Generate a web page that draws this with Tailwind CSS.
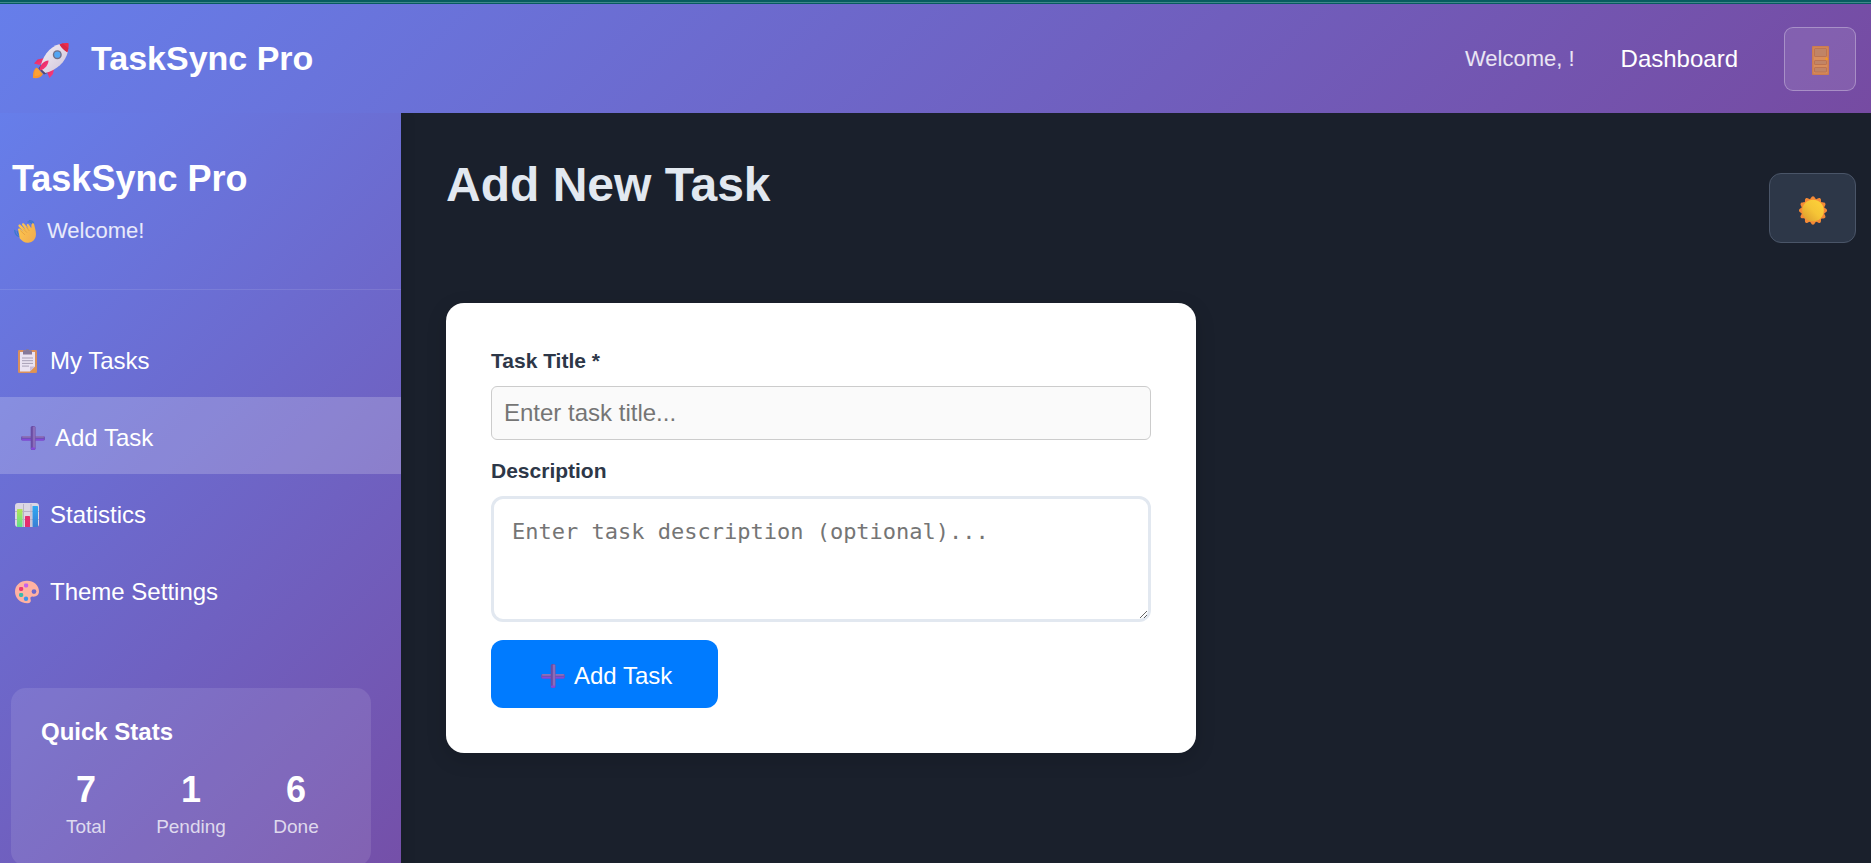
<!DOCTYPE html>
<html lang="en">
<head>
<meta charset="utf-8">
<meta name="viewport" content="width=device-width, initial-scale=1">
<title>TaskSync Pro - Add New Task</title>
<script src="https://cdn.jsdelivr.net/npm/@tailwindcss/browser@4"></script>
</head>
<body class="flex h-screen flex-col overflow-hidden bg-[#1a202c] font-['Liberation_Sans',Arial,sans-serif] text-2xl text-white">

<svg class="absolute size-0" aria-hidden="true">
  <defs>
    <linearGradient id="g-body" x1="0" y1="0" x2="1" y2="1"><stop offset="0" stop-color="#f4eff6"/><stop offset="1" stop-color="#cfc3d8"/></linearGradient>
    <linearGradient id="g-red" x1="0" y1="0" x2="1" y2="1"><stop offset="0" stop-color="#e0265a"/><stop offset="1" stop-color="#ff3f86"/></linearGradient>
    <linearGradient id="g-sun" x1="1" y1="0" x2="0" y2="1"><stop offset="0" stop-color="#ffd43a"/><stop offset="0.5" stop-color="#f5c436"/><stop offset="1" stop-color="#d9982e"/></linearGradient>
    <linearGradient id="g-green" x1="0" y1="0" x2="0" y2="1"><stop offset="0" stop-color="#b4e455"/><stop offset="1" stop-color="#5fe08c"/></linearGradient>
    <linearGradient id="g-blue" x1="0" y1="0" x2="0" y2="1"><stop offset="0" stop-color="#2fa8f2"/><stop offset="1" stop-color="#3a7fd4"/></linearGradient>
    <linearGradient id="g-hand" x1="0" y1="0" x2="1" y2="1"><stop offset="0" stop-color="#ffc94d"/><stop offset="1" stop-color="#f0a94e"/></linearGradient>
    <symbol id="i-plus" viewBox="0 0 24 24">
      <rect x="0" y="10" width="24" height="4.6" rx="1.6" fill="#6f50b6"/>
      <rect x="1" y="10" width="22" height="1.8" rx="0.8" fill="#8b70b6"/>
      <rect x="1" y="13" width="22" height="1.5" rx="0.7" fill="#8448dc"/>
      <rect x="9.7" y="0" width="4.8" height="24" rx="1.6" fill="#6a4ca4"/>
      <rect x="11.8" y="0.6" width="2.4" height="22.6" rx="1" fill="#8a6cba"/>
      <rect x="10" y="21.6" width="4.2" height="2.2" rx="1" fill="#8448dc"/>
    </symbol>
  </defs>
</svg>

<div class="h-1 shrink-0 border-b border-[#085c60] bg-[#085c60] pt-[2px]"><div class="h-px bg-[#3f8a8a]"></div></div>

<header class="flex h-[109px] shrink-0 items-center justify-between bg-linear-[135deg,#667eea,#764ba2] pr-[15px] pl-[33px]">
  <div class="flex items-center gap-[22px]">
    <svg class="mt-1 size-9" viewBox="0 0 36 36" aria-hidden="true">
      <path d="M3.5 24.5C0 27 0 31 0 35c4.5.6 8-.4 10-4z" fill="#f9962c"/>
      <path d="M1.5 30c0-2.5 1-4 3-5l4 5c-1.500 2.500-4 3-7 3z" fill="#ffa93a" opacity=".6"/>
      <path d="M5.5 25.500l3-4.500 8 8-5.500 2.500z" fill="#514a72"/>
      <path d="M14 14.500L4.500 16.500 1 20.500l5.500 1.500z" fill="url(#g-red)"/>
      <path d="M22 21l-2 10-3.500 4-3-7z" fill="url(#g-red)"/>
      <path d="M7.500 25.500C8.500 15 16 3.500 27 1L35 8c-2 11-12 19.500-22.500 22z" fill="url(#g-body)"/>
      <path d="M26.500 1.500C29.500.2 32.500-.2 35.500.2c.4 3 .1 6-1.200 9z" fill="#f02c48"/>
      <path d="M26.500 1.500c2 3.500 4.500 6 7.800 7.700l1-4C33 3.500 31 1 30 .5z" fill="#d92845"/>
      <path d="M6.500 25.500c1.500-4.500 4.500-7.500 9-8-.2 4.500-3.500 8.500-8 10z" fill="url(#g-red)"/>
      <circle cx="24.300" cy="11.700" r="4.500" fill="#716f88"/>
      <circle cx="24.300" cy="11.700" r="3.100" fill="#53a6f4"/>
    </svg>
    <span class="pb-[2px] text-[34px] leading-10 font-bold">TaskSync Pro</span>
  </div>
  <nav class="flex items-center gap-[46px]">
    <span class="text-[22px] text-white/85">Welcome, !</span>
    <a href="#dashboard">Dashboard</a>
    <button type="button" aria-label="Log out" class="flex h-16 w-[72px] items-center justify-center rounded-[9px] border border-white/30 bg-white/10">
      <svg class="mt-1 h-[29px] w-[17px]" viewBox="0 0 17 29" aria-hidden="true">
        <rect width="17" height="29" rx="1" fill="#cc7c50"/>
        <rect x="1.500" y="1.500" width="14" height="26" fill="#d98e5c"/>
        <g fill="#c18466" stroke="#b86e4e" stroke-width=".8"><rect x="2.500" y="2.500" width="12" height="8" rx=".6"/><rect x="2.500" y="14.500" width="12" height="4" rx=".6"/><rect x="2.500" y="21.500" width="12" height="4.500" rx=".6"/></g>
        <circle cx="14.600" cy="12.800" r="1.400" fill="#f39a22"/>
      </svg>
    </button>
  </nav>
</header>

<div class="flex min-h-0 flex-1 overflow-hidden">
  <aside class="flex h-screen w-[401px] shrink-0 flex-col bg-linear-[135deg,#667eea,#764ba2] shadow-[0_0_15px_rgba(0,0,0,0.12)]">
    <div class="border-b border-white/10 pt-[39px] pr-4 pb-[41px] pl-3">
      <h2 class="text-4xl leading-[54px] font-bold">TaskSync Pro</h2>
      <p class="mt-2 flex items-center gap-[10px] pl-[2px] text-[22px] leading-[34px] text-white/85">
        <svg class="size-[23px]" viewBox="0 0 23 23" aria-hidden="true">
          <g fill="none" stroke="#3b78cc" stroke-width="1.300" stroke-linecap="round"><path d="M.8 10.500c.2 3 1.800 5.200 4.400 6"/><path d="M3.200 11.500c.2 1.600 1 2.800 2.300 3.500"/><path d="M14 2c2.200-.2 3.800.8 4.500 2.800"/><path d="M15.500.7c2 0 3.400.8 4.100 2.300"/></g>
          <g transform="rotate(-12 14 14)">
            <path d="M5.300 8.600c-.8-1.500 1-2.700 2-1.400l3 3.900-3.800-6.300c-.8-1.500 1.200-2.700 2.200-1.200l4 6-2.500-5.500c-.6-1.600 1.400-2.400 2.200-1l3.200 6-.9-3.600c-.3-1.500 1.500-2 2.100-.6.600 1.500 1 3 1.600 4.200.5-1.300.5-2.600 1.100-4 .6-1.300 2.500-.9 2.500.8 0 3.500.6 6.800-.4 10.500-1.200 4.500-4.600 6.300-8 6.300-4.500 0-6.600-3-8.600-6.300z" fill="url(#g-hand)"/>
            <path d="M7.500 9.500l3.200 4.500M10.500 8l2.600 4.200M14 7.500l1.800 3.500" stroke="#df9a3e" stroke-width=".7" fill="none" stroke-linecap="round"/>
          </g>
        </svg>
        Welcome!
      </p>
    </div>

    <nav class="mt-[30px] flex flex-col">
      <a href="#tasks" class="flex h-[77px] items-center gap-[11px] pt-1 pl-[15px]">
        <svg class="size-6" viewBox="0 0 24 24" aria-hidden="true">
          <rect x="3" y="1" width="19" height="23" rx="1.200" fill="#d98f5c"/>
          <path d="M5 3h15v14.500L15 22.500H5z" fill="#eae3f2"/>
          <path d="M20 17.500h-5v5z" fill="#cbbcd8"/>
          <path d="M20.500 18v5H15z" fill="#e0954f"/>
          <path d="M8 2.500c0-.8.6-1.200 1.300-1.200H11c0-1.600 3-1.600 3 0h1.700c.7 0 1.300.4 1.300 1.200v3H8z" fill="#85799a"/>
          <g stroke="#a79fb5" stroke-width="1"><path d="M7 9h11M7 11.700h11M7 14.400h11M7 17.100h7"/></g>
        </svg>
        My Tasks
      </a>
      <a href="#add" aria-current="page" class="flex h-[77px] items-center gap-[10px] bg-white/20 pt-1 pl-[21px]">
        <svg class="size-6" aria-hidden="true"><use href="#i-plus"/></svg>
        Add Task
      </a>
      <a href="#statistics" class="flex h-[77px] items-center gap-[11px] pt-1 pl-[15px]">
        <svg class="size-6" viewBox="0 0 24 24" aria-hidden="true">
          <rect width="24" height="24" rx="3" fill="#dcd6e4"/>
          <g stroke="#b9b1c6" stroke-width="1"><path d="M8.500 1v23M16 1v23M0 8.500h24M0 16.500h24"/></g>
          <rect x="2" y="6" width="5.500" height="18" rx=".6" fill="url(#g-green)"/>
          <rect x="10" y="13" width="5" height="11" rx=".6" fill="#e52e6d"/>
          <rect x="17.500" y="3" width="5.500" height="21" rx=".6" fill="url(#g-blue)"/>
        </svg>
        Statistics
      </a>
      <a href="#theme" class="flex h-[77px] items-center gap-[11px] pt-1 pl-[15px]">
        <svg class="size-6" viewBox="0 0 24 24" aria-hidden="true">
          <path fill-rule="evenodd" d="M12 .8C5 .8 0 5.500 0 11.700c0 6 4.800 11.500 12.500 11.500 2.800 0 3.900-1.700 3.100-3.700-.6-1.600.1-3 2-2.900 4 .3 6.400-1.600 6.400-5C24 5.500 19 .8 12 .8zM19 9.300a2.400 2.300 0 1 1 0 4.600 2.400 2.300 0 0 1 0-4.600z" fill="#ffb2a2"/>
          <rect x="9" y="3.500" width="4.200" height="4" rx="1.400" fill="#c660ee"/>
          <rect x="4" y="7" width="4.200" height="4" rx="1.400" fill="#ec3a74"/>
          <rect x="4" y="13" width="4.200" height="4" rx="1.400" fill="#3db9ac"/>
          <circle cx="11" cy="18.800" r="2.200" fill="#3d95ec"/>
        </svg>
        Theme Settings
      </a>
    </nav>

    <section class="mt-[60px] mr-[30px] ml-[11px] shrink-0 rounded-[15px] bg-white/10 px-[30px] pt-[26px] pb-[25px]">
      <h3 class="leading-9 font-bold">Quick Stats</h3>
      <dl class="mt-[19px] grid grid-cols-3 gap-[15px] text-center">
        <div class="flex flex-col-reverse gap-[2px]"><dt class="text-[19px] leading-7 text-white/75">Total</dt><dd class="text-4xl leading-[42px] font-bold">7</dd></div>
        <div class="flex flex-col-reverse gap-[2px]"><dt class="text-[19px] leading-7 text-white/75">Pending</dt><dd class="text-4xl leading-[42px] font-bold">1</dd></div>
        <div class="flex flex-col-reverse gap-[2px]"><dt class="text-[19px] leading-7 text-white/75">Done</dt><dd class="text-4xl leading-[42px] font-bold">6</dd></div>
      </dl>
    </section>
  </aside>

  <main class="min-w-0 flex-1 pt-[45px] pr-[15px] pl-[45px]">
    <div class="flex items-start justify-between">
      <h1 class="text-5xl leading-[54px] font-bold text-[#e2e8f0]">Add New Task</h1>
      <button type="button" aria-label="Switch to light theme" class="mt-[15px] flex h-[70px] w-[87px] items-center justify-center rounded-xl border border-[#4a5568] bg-[#2d3748]">
        <svg class="mt-1 h-[29px] w-7" viewBox="0 0 28 29" aria-hidden="true">
          <g fill="#f58a36"><circle cx="14" cy="14.500" r="11.500"/><path id="ray" d="M9.500 4.500C11.800 3.800 12 .3 14 .3s2.200 3.500 4.500 4.200z"/>
          <use href="#ray" transform="rotate(30 14 14.500)"/><use href="#ray" transform="rotate(60 14 14.500)"/><use href="#ray" transform="rotate(90 14 14.500)"/><use href="#ray" transform="rotate(120 14 14.500)"/><use href="#ray" transform="rotate(150 14 14.500)"/><use href="#ray" transform="rotate(180 14 14.500)"/><use href="#ray" transform="rotate(210 14 14.500)"/><use href="#ray" transform="rotate(240 14 14.500)"/><use href="#ray" transform="rotate(270 14 14.500)"/><use href="#ray" transform="rotate(300 14 14.500)"/><use href="#ray" transform="rotate(330 14 14.500)"/></g>
          <circle cx="14" cy="14.500" r="10.800" fill="url(#g-sun)"/>
        </svg>
      </button>
    </div>

    <form class="mt-[60px] flex w-full max-w-[750px] flex-col rounded-[18px] bg-white p-[45px] shadow-[0_6px_20px_rgba(0,0,0,0.15)]">
      <label for="title" class="text-[21px] leading-[26px] font-bold text-[#2d3748]">Task Title *</label>
      <input id="title" type="text" placeholder="Enter task title..." class="mt-3 h-[54px] rounded-md border border-[#cccccc] bg-[#fafafa] px-3 text-[#333333] placeholder:text-[#757575]">
      <label for="description" class="mt-[18px] text-[21px] leading-[26px] font-bold text-[#2d3748]">Description</label>
      <textarea id="description" placeholder="Enter task description (optional)..." class="mt-3 h-[126px] resize-y rounded-xl border-3 border-[#e2e8f0] bg-white p-[18px] font-['DejaVu_Sans_Mono',monospace] text-[22px] leading-[30px] text-[#333333] placeholder:text-[#757575]"></textarea>
      <button type="submit" class="mt-[18px] flex h-[68px] items-center gap-[9px] self-start rounded-xl bg-[#007bff] pt-1 pr-[46px] pl-[50px]">
        <svg class="size-6" aria-hidden="true"><use href="#i-plus"/></svg>
        Add Task
      </button>
    </form>
  </main>
</div>
</body>
</html>
